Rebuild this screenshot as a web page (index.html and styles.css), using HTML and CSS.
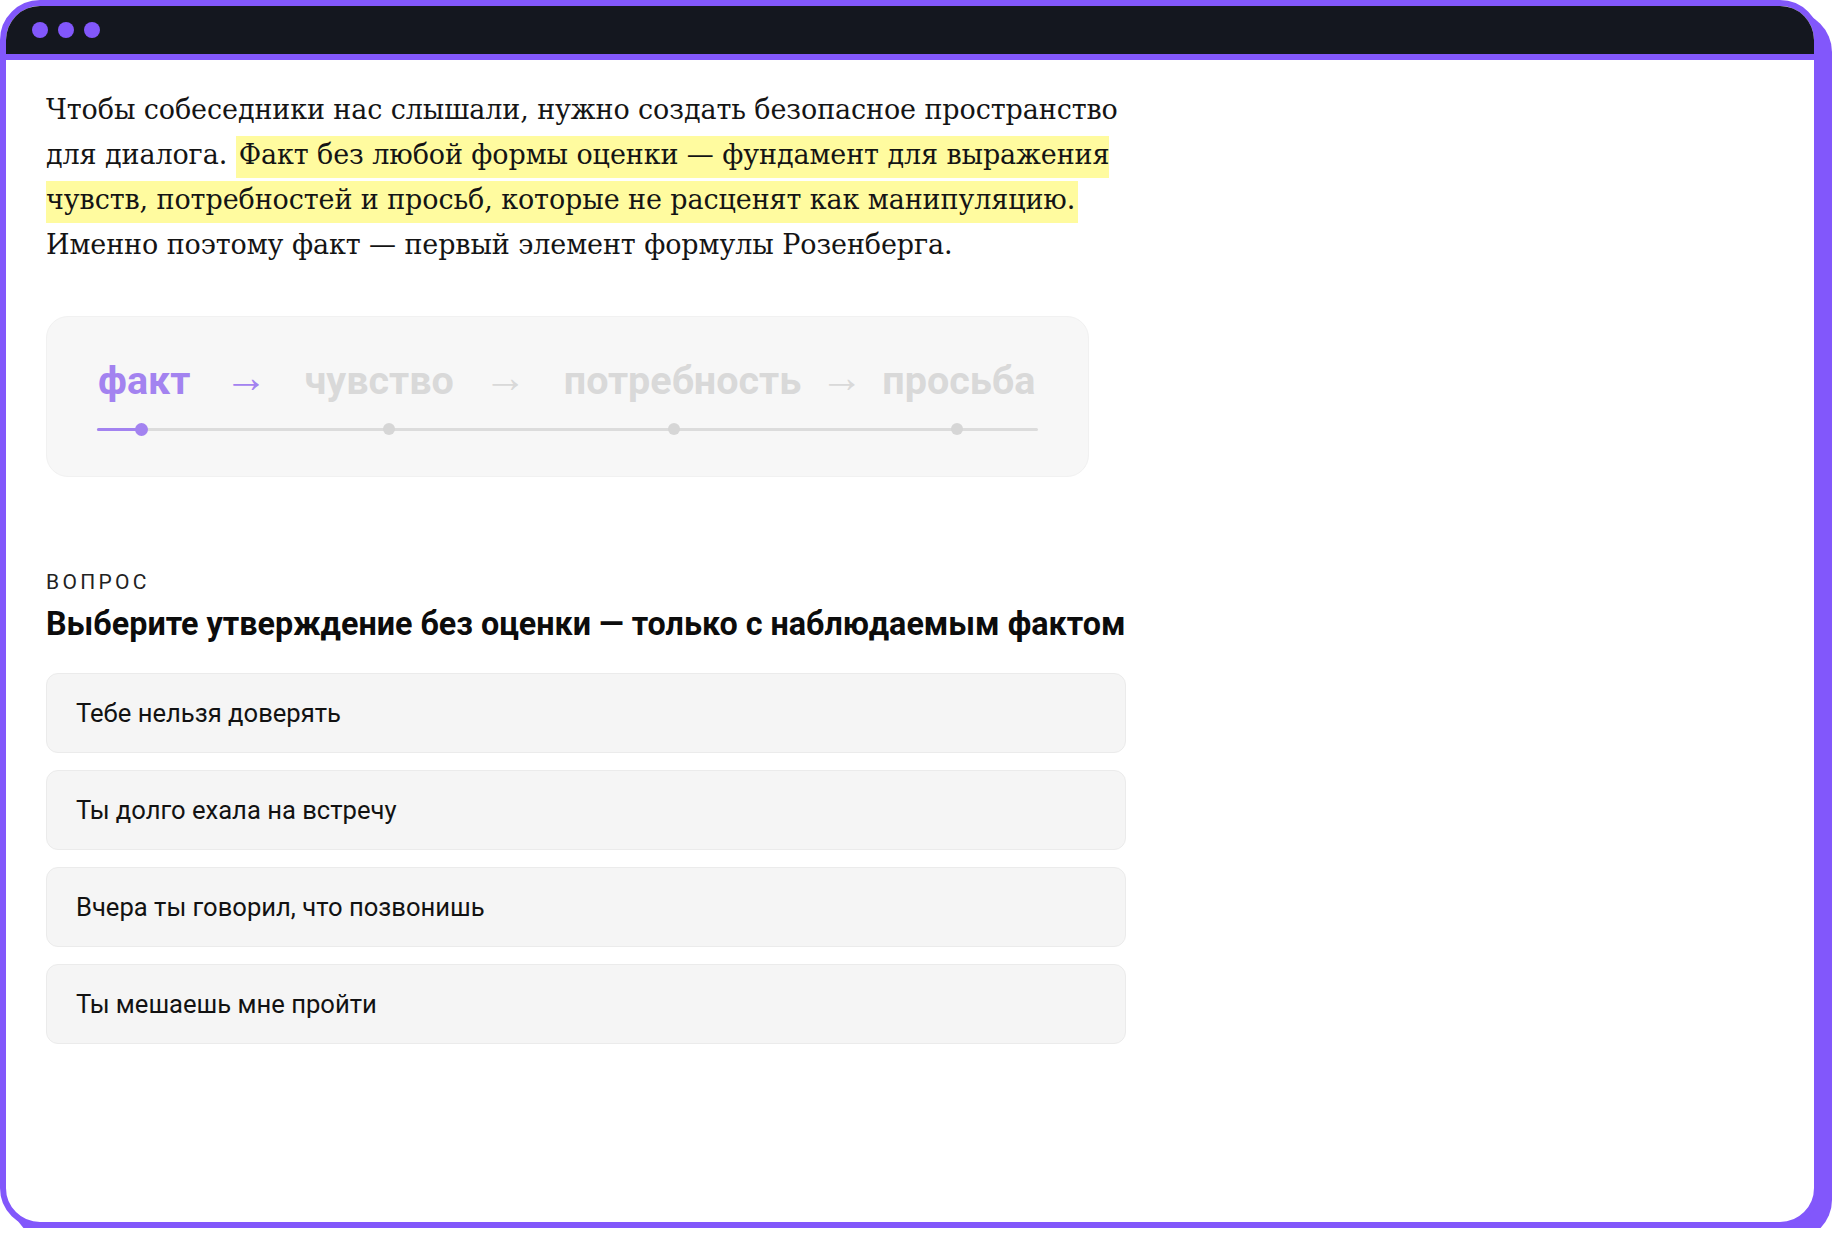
FILE: index.html
```html
<!DOCTYPE html>
<html lang="ru">
<head>
<meta charset="utf-8">
<title>Факт — первый элемент</title>
<link rel="stylesheet" href="styles.css">
</head>
<body>
<div class="window">
  <div class="titlebar">
    <span class="dot"></span><span class="dot"></span><span class="dot"></span>
  </div>
  <main class="content">
    <p class="lead">Чтобы собеседники нас слышали, нужно создать безопасное пространство для диалога. <mark class="hl">Факт без любой формы оценки — фундамент для выражения чувств, потребностей и просьб, которые не расценят как манипуляцию.</mark> Именно поэтому факт — первый элемент формулы Розенберга.</p>

    <div class="flow">
      <div class="steps">
        <span class="step is-active">факт</span>
        <span class="arrow is-active">→</span>
        <span class="step">чувство</span>
        <span class="arrow arrow-mid">→</span>
        <span class="step">потребность</span>
        <span class="arrow arrow-tight">→</span>
        <span class="step">просьба</span>
      </div>
      <div class="track">
        <div class="track-fill" style="width:4.7%"></div>
        <span class="node is-active" style="left:4.7%"></span>
        <span class="node" style="left:31%"></span>
        <span class="node" style="left:61.3%"></span>
        <span class="node" style="left:91.4%"></span>
      </div>
    </div>

    <section class="question">
      <div class="eyebrow">ВОПРОС</div>
      <h2 class="question-title">Выберите утверждение без оценки — только с наблюдаемым фактом</h2>
      <div class="options">
        <button class="option" type="button">Тебе нельзя доверять</button>
        <button class="option" type="button">Ты долго ехала на встречу</button>
        <button class="option" type="button">Вчера ты говорил, что позвонишь</button>
        <button class="option" type="button">Ты мешаешь мне пройти</button>
      </div>
    </section>
  </main>
</div>
</body>
</html>
```

FILE: styles.css
```css
* { box-sizing: border-box; }

html, body {
  margin: 0;
  padding: 0;
  background: #ffffff;
}

.window {
  width: 1820px;
  height: 1228px;
  border: 6px solid #8257fb;
  border-radius: 40px;
  box-shadow: 12px 12px 0 0 #8257fb;
  background: #ffffff;
  overflow: hidden;
  display: flex;
  flex-direction: column;
}

.titlebar {
  flex: 0 0 auto;
  height: 54px;
  background: #14171f;
  border-bottom: 6px solid #8257fb;
  display: flex;
  align-items: center;
  gap: 10px;
  padding-left: 26px;
}

.dot {
  width: 16px;
  height: 16px;
  border-radius: 50%;
  background: #8257fb;
}

.content {
  width: 1160px;
  padding: 27px 40px 0 40px;
}

.lead {
  margin: 0;
  font-family: "DejaVu Serif", "Liberation Serif", serif;
  font-size: 27px;
  line-height: 45px;
  letter-spacing: -0.1px;
  color: #141414;
}

.hl {
  background: #fffb9f;
  color: inherit;
  padding: 3px 3px 8px 3px;
}

.flow {
  margin-top: 49px;
  width: 1043px;
  background: #f7f7f7;
  border: 1px solid #f1f1f1;
  border-radius: 22px;
  padding: 42px 50px 41px 50px;
}

.steps {
  display: flex;
  align-items: center;
  height: 44px;
  padding-left: 1px;
  font-family: Roboto, "Liberation Sans", sans-serif;
  font-weight: 700;
  font-size: 39.5px;
  line-height: 44px;
  color: #d9d9d9;
}

.step.is-active { color: #a383f0; }

.arrow {
  font-size: 43px;
  margin: 0 37px 0 34px;
  transform: translateY(-4px);
}
.arrow.is-active { color: #a383f0; }
.arrow-mid { margin: 0 37px 0 30px; }
.arrow-tight { margin: 0 19px 0 19px; }

.track {
  position: relative;
  margin-top: 20px;
  height: 12px;
}
.track::before {
  content: "";
  position: absolute;
  left: 0;
  right: 0;
  top: 5px;
  height: 3px;
  background: #dcdcdc;
  border-radius: 2px;
}
.track-fill {
  position: absolute;
  left: 0;
  top: 5px;
  height: 3px;
  background: #a383f0;
  border-radius: 2px;
}
.node {
  position: absolute;
  top: 0;
  width: 12px;
  height: 12px;
  margin-left: -6px;
  border-radius: 50%;
  background: #d6d6d6;
}
.node.is-active { background: #a383f0; width: 13px; height: 13px; margin-left: -6.5px; top: -0.5px; }

.question {
  margin-top: 93px;
  width: 1080px;
  font-family: Roboto, "Liberation Sans", sans-serif;
}

.eyebrow {
  font-size: 21px;
  line-height: 24px;
  letter-spacing: 3.3px;
  color: #222222;
}

.question-title {
  margin: 10px 0 0 0;
  font-size: 32.3px;
  line-height: 40px;
  font-weight: 700;
  color: #0c0c0c;
}

.options {
  margin-top: 29px;
  display: flex;
  flex-direction: column;
  gap: 17px;
}

.option {
  display: flex;
  align-items: center;
  height: 80px;
  width: 100%;
  padding: 0 0 0 29px;
  background: #f5f5f5;
  border: 1px solid #ebebeb;
  border-radius: 12px;
  font-family: Roboto, "Liberation Sans", sans-serif;
  font-size: 25.6px;
  color: #121212;
  text-align: left;
  cursor: pointer;
}
```
